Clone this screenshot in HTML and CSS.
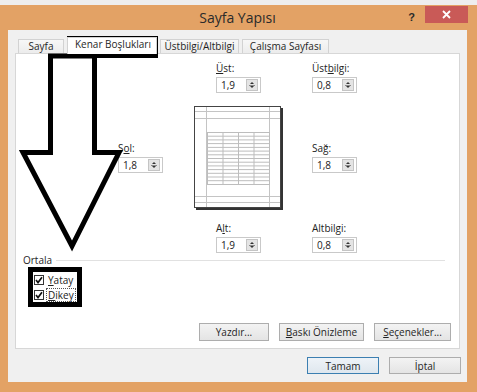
FILE: index.html
```html
<!DOCTYPE html>
<html lang="tr">
<head>
<meta charset="utf-8">
<title>Sayfa Yapısı</title>
<link rel="stylesheet" href="styles.css">
</head>
<body>
<div class="desktop-strip"></div>
<div class="window">
  <div class="titlebar">
    <div class="title">Sayfa Yapısı</div>
    <div class="controls">
      <span class="help">?</span>
      <span class="close">
        <svg width="9" height="9" viewBox="0 0 9 9"><path d="M1 1L8 8M8 1L1 8" stroke="#fff" stroke-width="1.8"/></svg>
      </span>
    </div>
  </div>
  <div class="client">
    <div class="tabs">
      <div class="tab tab-sayfa">Sayfa</div>
      <div class="tab tab-active">Kenar Boşlukları</div>
      <div class="tab tab-ust">Üstbilgi/Altbilgi</div>
      <div class="tab tab-calisma">Çalışma Sayfası</div>
    </div>
    <div class="panel">
      <div class="margins">
        <div class="field f-top"><div class="lbl"><u>Ü</u>st:</div><div class="spin"><span class="val">1,9</span><span class="arrows"><i class="up"></i><i class="down"></i></span></div></div>
        <div class="field f-header"><div class="lbl">Üst<u>b</u>ilgi:</div><div class="spin"><span class="val">0,8</span><span class="arrows"><i class="up"></i><i class="down"></i></span></div></div>
        <div class="field f-left"><div class="lbl">S<u>o</u>l:</div><div class="spin"><span class="val">1,8</span><span class="arrows"><i class="up"></i><i class="down"></i></span></div></div>
        <div class="preview">
          <svg width="89" height="105" viewBox="0 0 89 105">
            <rect x="0.5" y="0.5" width="86" height="101" fill="#fff" stroke="#444"/>
            <path d="M2 103H88V2" fill="none" stroke="#333" stroke-width="2"/>
            <g stroke="#c4c4c4" stroke-width="1">
              <path d="M12.5 1V101M75.5 1V101M1 5.5H86M1 12.5H86M1 90.5H86M1 96.5H86"/>
            </g>
            <g stroke="#bdbdbd" stroke-width="1" fill="none">
              <rect x="13.5" y="26.5" width="62" height="52"/>
              <path d="M29 27V78M44.5 27V78M60 27V78"/>
              <path d="M14 30.2H75M14 33.9H75M14 37.6H75M14 41.4H75M14 45.1H75M14 48.8H75M14 52.5H75M14 56.2H75M14 59.9H75M14 63.6H75M14 67.3H75M14 71H75M14 74.7H75"/>
            </g>
          </svg>
        </div>
        <div class="field f-right"><div class="lbl">Sa<u>ğ</u>:</div><div class="spin"><span class="val">1,8</span><span class="arrows"><i class="up"></i><i class="down"></i></span></div></div>
        <div class="field f-bottom"><div class="lbl">A<u>l</u>t:</div><div class="spin"><span class="val">1,9</span><span class="arrows"><i class="up"></i><i class="down"></i></span></div></div>
        <div class="field f-footer"><div class="lbl">Altbilgi:</div><div class="spin"><span class="val">0,8</span><span class="arrows"><i class="up"></i><i class="down"></i></span></div></div>
      </div>
      <div class="group-head"><span>Ortala</span><span class="rule"></span></div>
      <div class="checks">
        <label class="check"><span class="box"><svg width="8" height="8" viewBox="0 0 8 8"><path d="M1 4L3 6.5L7 1.2" fill="none" stroke="#111" stroke-width="1.7"/></svg></span><span class="ctext"><u>Y</u>atay</span></label>
        <label class="check"><span class="box"><svg width="8" height="8" viewBox="0 0 8 8"><path d="M1 4L3 6.5L7 1.2" fill="none" stroke="#111" stroke-width="1.7"/></svg></span><span class="ctext focus"><u>D</u>ikey</span></label>
      </div>
      <div class="actions">
        <button class="btn btn-print">Yazdır...</button>
        <button class="btn btn-preview"><u>B</u>askı Önizleme</button>
        <button class="btn btn-options"><u>S</u>eçenekler...</button>
      </div>
    </div>
    <div class="dialog-buttons">
      <button class="btn btn-ok">Tamam</button>
      <button class="btn btn-cancel">İptal</button>
    </div>
  </div>
</div>
<svg class="annotation" width="477" height="392" viewBox="0 0 477 392">
  <g fill="none" stroke="#000" stroke-width="5" stroke-linejoin="miter">
    <rect x="69.5" y="38.5" width="86" height="17"/>
    <polygon points="50.5,56 50.5,152.5 23,152.5 72,246 119,152.5 94.5,152.5 94.5,56"/>
    <rect x="30.5" y="269.5" width="49" height="35"/>
  </g>
</svg>
</body>
</html>
```
FILE: styles.css
```css
* { box-sizing: border-box; }
html, body { margin: 0; padding: 0; }
body {
  width: 477px;
  height: 392px;
  overflow: hidden;
  position: relative;
  background: #f3f3f3;
  font-family: "Open Sans", "Noto Sans", sans-serif;
  font-size: 10px;
  color: #1f1f1f;
}
u { text-decoration: underline; text-underline-offset: 1px; }

.desktop-strip { height: 5px; background: #eeeeee; }

.window {
  height: 387px;
  background: #e3a265;
  padding: 0 10px 10px 8px;
  display: flex;
  flex-direction: column;
}

.titlebar {
  height: 25px;
  flex: none;
  display: grid;
  grid-template-columns: 1fr auto 1fr;
}
.title {
  grid-column: 2;
  font-size: 14px;
  line-height: 25px;
  color: #2a2a2a;
}
.controls {
  grid-column: 3;
  justify-self: end;
  display: flex;
  align-items: flex-start;
  margin-right: -1px;
}
.help {
  font-family: "Liberation Sans", sans-serif;
  font-weight: bold;
  font-size: 11px;
  line-height: 14px;
  margin-top: 5px;
  margin-right: 10px;
  color: #2a2a2a;
}
.close {
  width: 43px;
  height: 17px;
  margin-top: 1px;
  background: #c95a57;
  display: flex;
  align-items: center;
  justify-content: center;
}
.close svg { display: block; }

.client {
  flex: 1;
  background: #f0f0f0;
  padding: 7px 6px 8px 7px;
  display: flex;
  flex-direction: column;
}

.tabs {
  height: 16px;
  flex: none;
  display: flex;
  align-items: flex-end;
  padding-left: 3px;
  gap: 3px;
  position: relative;
  z-index: 1;
}
.tab {
  height: 14px;
  line-height: 13px;
  padding: 0 7px;
  border: 1px solid #d2d2d2;
  border-bottom: none;
  background: linear-gradient(#f7f7f7, #ececec);
  white-space: nowrap;
}
.tab-sayfa { width: 46px; text-align: center; }
.tab-active {
  width: 90px;
  height: 17px;
  margin-bottom: -1px;
  background: #fff;
  text-align: center;
}
.tab-ust { width: 79px; text-align: center; padding: 0; }
.tab-calisma { width: 87px; text-align: center; padding: 0; }

.panel {
  height: 296px;
  flex: none;
  margin-right: 1px;
  background: #fff;
  border: 1px solid #d7d7d7;
  padding: 8px 8px 7px 7px;
  display: flex;
  flex-direction: column;
}

.margins {
  display: grid;
  grid-template-columns: 95px 45px 31px 89px 29px 47px;
  grid-template-rows: auto auto auto;
}
.field { display: flex; flex-direction: column; }
.lbl { line-height: 13px; height: 13px; margin-bottom: 2px; color: #222; }
.f-top { grid-column: 4; grid-row: 1; width: 45px; justify-self: center; }
.f-header { grid-column: 6; grid-row: 1; }
.f-left { grid-column: 2; grid-row: 2; align-self: center; }
.preview { grid-column: 4; grid-row: 2; margin: 13px 0 11px; height: 105px; }
.preview svg { display: block; }
.f-right { grid-column: 6; grid-row: 2; align-self: center; }
.f-bottom { grid-column: 4; grid-row: 3; width: 45px; justify-self: center; }
.f-footer { grid-column: 6; grid-row: 3; }

.spin {
  width: 45px;
  height: 16px;
  border: 1px solid #c9c9c9;
  background: #fff;
  display: flex;
  align-items: center;
  justify-content: space-between;
  padding: 1px 2px 1px 4px;
}
.val { font-size: 10px; line-height: 12px; color: #222; }
.arrows {
  width: 12px;
  height: 12px;
  background: #e4e4e4;
  border: 1px solid #c4c4c4;
  display: flex;
  flex-direction: column;
  align-items: center;
  justify-content: center;
  gap: 2px;
  position: relative;
}
.arrows::after {
  content: "";
  position: absolute;
  left: 2px;
  right: 2px;
  top: 4.5px;
  height: 1px;
  background: #8a8a8a;
}
.arrows i { display: block; width: 0; height: 0; border-left: 2.5px solid transparent; border-right: 2.5px solid transparent; }
.arrows .up { border-bottom: 2.5px solid #333; }
.arrows .down { border-top: 2.5px solid #333; }

.group-head {
  display: flex;
  align-items: center;
  line-height: 13px;
  margin-top: 1px;
  margin-right: 6px;
}
.group-head .rule {
  flex: 1;
  height: 1px;
  background: #e1e1e1;
  margin-left: 4px;
}

.checks { margin-top: 5px; margin-left: 11px; display: flex; flex-direction: column; }
.check { display: flex; align-items: center; height: 15px; }
.box {
  width: 10px;
  height: 10px;
  border: 1px solid #333;
  background: #fff;
  display: flex;
  align-items: center;
  justify-content: center;
  margin-right: 3px;
}
.box svg { display: block; }
.ctext { line-height: 12px; padding: 0 1px; color: #222; }
.ctext.focus { outline: 1px dotted #555; outline-offset: 0; }

.actions {
  margin-top: auto;
  display: flex;
  justify-content: flex-end;
  gap: 10px;
}
.btn {
  height: 18px;
  font-family: "Open Sans", "Noto Sans", sans-serif;
  font-size: 10px;
  line-height: 14px;
  color: #1f1f1f;
  border: 1px solid #adadad;
  background: linear-gradient(#f3f3f3, #e4e4e4);
  padding: 0;
  margin: 0;
}
.btn-print { width: 70px; }
.btn-preview { width: 85px; }
.btn-options { width: 77px; }

.dialog-buttons {
  margin-top: 8px;
  display: flex;
  justify-content: flex-end;
  gap: 10px;
}
.dialog-buttons .btn { width: 72px; height: 17px; }
.btn-ok { border-color: #3c7fb1; background: linear-gradient(#eef3f8, #dfe7ee); }

.annotation {
  position: absolute;
  top: 0;
  left: 0;
  pointer-events: none;
}
```
